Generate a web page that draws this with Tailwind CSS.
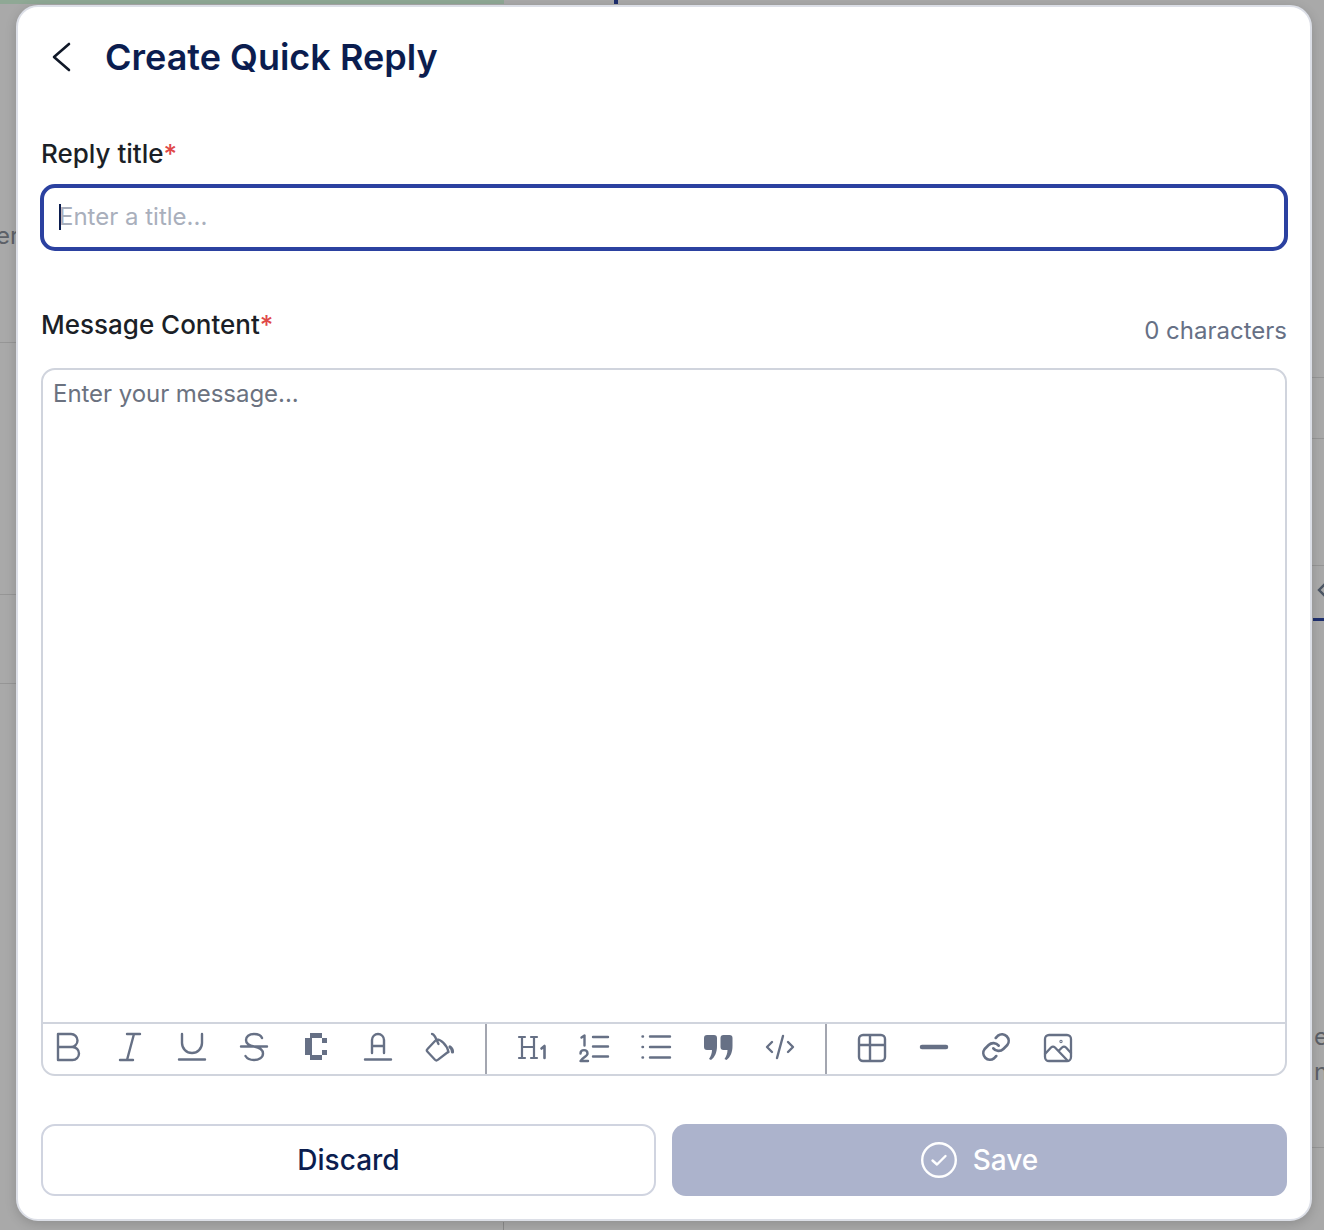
<!DOCTYPE html>
<html lang="en">
<head>
    <meta charset="UTF-8">
    <title>Create Quick Reply</title>
    <script src="https://cdn.jsdelivr.net/npm/@tailwindcss/browser@4"></script>
</head>
<body class="font-['Inter',sans-serif] bg-[#a9a9a9]">
    <div class="relative w-[1324px] h-[1230px] overflow-hidden pt-[5px] pl-[16px]">
        <!-- page behind the modal -->
        <div class="absolute top-0 left-0 w-[504px] h-[4px] bg-[#8fa895]"></div>
        <div class="absolute top-0 left-[614px] w-[4px] h-[4px] bg-[#1e2f6e]"></div>
        <div class="absolute top-[224px] left-[-4px] text-[24px] leading-[24px] text-[#5d6168]">er</div>
        <div class="absolute top-[342px] left-0 w-[16px] h-[1px] bg-[#969696]"></div>
        <div class="absolute top-[594px] left-0 w-[16px] h-[1px] bg-[#969696]"></div>
        <div class="absolute top-[683px] left-0 w-[16px] h-[1px] bg-[#969696]"></div>
        <div class="absolute top-[377px] left-[1312px] w-[12px] h-[1px] bg-[#969696]"></div>
        <div class="absolute top-[438px] left-[1312px] w-[12px] h-[1px] bg-[#969696]"></div>
        <div class="absolute top-[565px] left-[1312px] w-[12px] h-[1px] bg-[#969696]"></div>
        <div class="absolute top-[618px] left-[1313px] w-[11px] h-[3px] bg-[#1e2f6e]"></div>
        <svg class="absolute top-[582px] left-[1317px]" width="7" height="16" viewBox="0 0 7 16" fill="none" stroke="#4b5563" stroke-width="2.4"><path d="M8 2 2 8l6 6"/></svg>
        <div class="absolute top-[1025px] left-[1314px] text-[24px] leading-[24px] text-[#5d6168]">e</div>
        <div class="absolute top-[1060px] left-[1314px] text-[24px] leading-[24px] text-[#5d6168]">n</div>
        <div class="absolute top-[1147px] left-[1312px] w-[12px] h-[1px] bg-[#969696]"></div>
        <div class="absolute top-[1222px] left-[503px] w-[1px] h-[8px] bg-[#8a8a8a]"></div>

        <!-- modal -->
        <div class="relative flex flex-col w-[1296px] h-[1216px] bg-white rounded-[22px] border-2 border-[#dcdfe7] px-[23px] pt-[22px] shadow-[0_3px_12px_rgba(0,0,0,0.16)]">
            <div class="flex items-center h-[56px]">
                <button class="w-[40px] flex justify-center">
                    <svg width="24" height="32" viewBox="0 0 24 32" fill="none" stroke="#101828" stroke-width="2.6" stroke-linecap="round" stroke-linejoin="round"><path d="M20 3 5 16l15 13"/></svg>
                </button>
                <h1 class="ml-[24px] text-[36px] leading-[56px] font-semibold text-[#0b1d4f]">Create Quick Reply</h1>
            </div>

            <label class="mt-[51px] h-[36px] text-[26px] leading-[36px] font-medium text-[#1b1f27]">Reply title<span class="text-[#e04848]">*</span></label>
            <div class="relative mt-[11.5px] -mx-[1px]">
                <input type="text" placeholder="Enter a title..." class="w-full h-[67px] rounded-[15px] border-[4px] border-[#2b41a0] pl-[15px] pb-[2px] text-[24px] text-[#1b1f27] placeholder:text-[#a9afbc] outline-none">
                <span class="absolute left-[19px] top-[20.5px] w-[2px] h-[26px] bg-[#0b1d4f]"></span>
            </div>

            <div class="mt-[56.5px] h-[36px] flex justify-between">
                <label class="text-[26px] leading-[36px] font-medium text-[#1b1f27]">Message Content<span class="text-[#e04848]">*</span></label>
                <span class="mt-[6px] text-[24px] leading-[36px] text-[#667085]">0 characters</span>
            </div>

            <div class="mt-[25px] h-[708px] flex flex-col rounded-[14px] border-2 border-[#d0d4dd]">
                <textarea placeholder="Enter your message..." class="flex-1 resize-none px-[10px] py-[6px] text-[24px] leading-[36px] tracking-[-0.05px] placeholder:text-[#6b7280] outline-none rounded-t-[12px]"></textarea>
                <div class="h-[52px] flex items-stretch border-t-2 border-[#d0d4dd] text-[#667085]">
                    <div class="flex gap-[12px] pb-[4px]">
                        <button class="w-[50px] flex items-center justify-center">
                            <svg width="32" height="32" viewBox="0 0 32 32" fill="none" stroke="currentColor" stroke-width="2.4" stroke-linecap="round" stroke-linejoin="round"><path d="M6 3v26h14.5a6.5 6.5 0 0 0 0-13H6m0 0h13a6.5 6.5 0 0 0 0-13H6"/></svg>
                        </button>
                        <button class="w-[50px] flex items-center justify-center">
                            <svg width="32" height="32" viewBox="0 0 32 32" fill="none" stroke="currentColor" stroke-width="2.4" stroke-linecap="round"><path d="M13 3h13M6 29h13M20 3l-7 26"/></svg>
                        </button>
                        <button class="w-[50px] flex items-center justify-center">
                            <svg width="32" height="32" viewBox="0 0 32 32" fill="none" stroke="currentColor" stroke-width="2.4" stroke-linecap="round"><path d="M6 3v9a10 10 0 0 0 20 0V3M3 28.5h26"/></svg>
                        </button>
                        <button class="w-[50px] flex items-center justify-center">
                            <svg width="32" height="32" viewBox="0 0 32 32" fill="none" stroke="currentColor" stroke-width="2.4" stroke-linecap="round"><path d="M24 7c-1-2.800-4-4-8-4-5 0-8 2.500-8 6 0 3.500 3 5.500 8 6.500 5 1 9 3 9 7s-4 6.500-9 6.500c-4 0-7-1.500-8.500-4M3 15.500h26"/></svg>
                        </button>
                        <button class="w-[50px] flex items-center justify-center">
                            <svg width="32" height="32" viewBox="0 0 32 32" fill="currentColor" shape-rendering="crispEdges"><path d="M10 2h12v5H10zM5 7h5v17H5zM10 7h2v17h-2zM22 7h5v5h-5zM22 19h5v5h-5zM10 24h12v5H10z"/></svg>
                        </button>
                        <button class="w-[50px] flex items-center justify-center">
                            <svg width="32" height="32" viewBox="0 0 32 32" fill="none" stroke="currentColor" stroke-width="2.4" stroke-linecap="round"><path d="M10 22V9a6 6 0 0 1 12 0v13M10 15h12M3 28.500h26"/></svg>
                        </button>
                        <button class="w-[50px] flex items-center justify-center">
                            <svg width="32" height="32" viewBox="0 0 32 32" fill="none" stroke="currentColor" stroke-width="2.300" stroke-linecap="round" stroke-linejoin="round"><path d="M11 10 3.500 18a2 2 0 0 0 0 2.800l7.500 8a2 2 0 0 0 2.800 0L24 21"/><path d="M12 8.500c4-1 11 5 12.500 12.500M8 3c2 0 3.500 3 6.500 10"/><path d="M26 16c1.500 1 2.500 3 2.500 5" stroke-width="3.200"/></svg>
                        </button>
                    </div>
                    <div class="w-[2px] ml-[20px] mr-[20px] bg-[#a3a6b0]"></div>
                    <div class="flex gap-[12px] pb-[4px]">
                        <button class="w-[50px] flex items-center justify-center">
                            <svg width="32" height="32" viewBox="0 0 32 32" fill="none" stroke="currentColor" stroke-width="2.200" stroke-linecap="round" stroke-linejoin="round"><path d="M3 6h6M3 27h6M6 6v21M15 6h6M15 27h6M18 6v21M6 16h12"/><path d="M25.500 17.500l3-2.500v12" stroke-width="2.600"/></svg>
                        </button>
                        <button class="w-[50px] flex items-center justify-center">
                            <svg width="32" height="32" viewBox="0 0 32 32" fill="none" stroke="currentColor" stroke-width="2.400" stroke-linecap="round" stroke-linejoin="round"><path d="M15 6h15M15 15.500h15M15 25.500h15"/><path d="M3.500 6.500l3-2v10M2.500 22.500c0-4.500 7-4.500 7 0 0 3-5 4-7 7.500h7.500"/></svg>
                        </button>
                        <button class="w-[50px] flex items-center justify-center">
                            <svg width="32" height="32" viewBox="0 0 32 32" fill="none" stroke="currentColor" stroke-width="2.400" stroke-linecap="round"><path d="M10 5.500h20M10 16h20M10 26.500h20"/><path d="M2.500 5.500h.5M2.500 16h.5M2.500 26.500h.5"/></svg>
                        </button>
                        <button class="w-[50px] flex items-center justify-center">
                            <svg width="32" height="32" viewBox="0 0 32 32" fill="currentColor"><path d="M5 4h7a3 3 0 0 1 3 3v8c0 6-2 11-6 14l-2-1c2-3 3-6 3-9H5a3 3 0 0 1-3-3V7a3 3 0 0 1 3-3zM21.500 4h6a3 3 0 0 1 3 3v8c0 6-2 11-6 14l-2-1c2-3 3-6 3-9h-4a3 3 0 0 1-3-3V7a3 3 0 0 1 3-3z"/></svg>
                        </button>
                        <button class="w-[50px] flex items-center justify-center">
                            <svg width="32" height="32" viewBox="0 0 32 32" fill="none" stroke="currentColor" stroke-width="2.400" stroke-linecap="round" stroke-linejoin="round"><path d="M8 11l-5 5 5 5M24 11l5 5-5 5M19 5l-6 22"/></svg>
                        </button>
                    </div>
                    <div class="w-[2px] ml-[20px] mr-[20px] bg-[#a3a6b0]"></div>
                    <div class="flex gap-[12px] pb-[4px]">
                        <button class="w-[50px] flex items-center justify-center">
                            <svg width="32" height="32" viewBox="0 0 32 32" fill="none" stroke="currentColor" stroke-width="2.400" stroke-linejoin="round"><rect x="3" y="4" width="26" height="26" rx="4"/><path d="M3 14h26M14 4v26"/></svg>
                        </button>
                        <button class="w-[50px] flex items-center justify-center">
                            <svg width="32" height="32" viewBox="0 0 32 32" fill="none" stroke="currentColor" stroke-width="4.500" stroke-linecap="round"><path d="M4 16h24"/></svg>
                        </button>
                        <button class="w-[50px] flex items-center justify-center">
                            <svg width="32" height="32" viewBox="0 0 24 24" fill="none" stroke="currentColor" stroke-width="2" stroke-linecap="round" stroke-linejoin="round"><path d="M10 13a5 5 0 0 0 7.500.5l3-3a5 5 0 0 0-7-7l-1.700 1.700"/><path d="M14 11a5 5 0 0 0-7.500-.5l-3 3a5 5 0 0 0 7 7l1.700-1.700"/></svg>
                        </button>
                        <button class="w-[50px] flex items-center justify-center">
                            <svg width="32" height="32" viewBox="0 0 32 32" fill="none" stroke="currentColor" stroke-width="2.300" stroke-linecap="round" stroke-linejoin="round"><rect x="3" y="4" width="26" height="26" rx="4"/><path d="M3 23l6-6.500a3 3 0 0 1 4 0L25 29M17 19.500l3-3a3 3 0 0 1 4 0l5 5.500"/><circle cx="19" cy="10.500" r=".5"/></svg>
                        </button>
                    </div>
                </div>
            </div>

            <div class="mt-[48px] grid grid-cols-2 gap-[16px]">
                <button class="h-[72px] rounded-[14px] border-2 border-[#d0d4e0] text-[28px] font-medium text-[#0b1d4f]">Discard</button>
                <button class="h-[72px] rounded-[14px] bg-[#acb3cc] flex items-center justify-center gap-[16px] text-[28px] font-medium text-white">
                    <svg width="36" height="36" viewBox="0 0 36 36" fill="none" stroke="currentColor" stroke-width="2.400" stroke-linecap="round" stroke-linejoin="round"><circle cx="18" cy="18" r="16.800"/><path d="M11.500 18.500l4.500 4 8.500-8.500"/></svg>
                    Save
                </button>
            </div>
        </div>
    </div>
</body>
</html>
